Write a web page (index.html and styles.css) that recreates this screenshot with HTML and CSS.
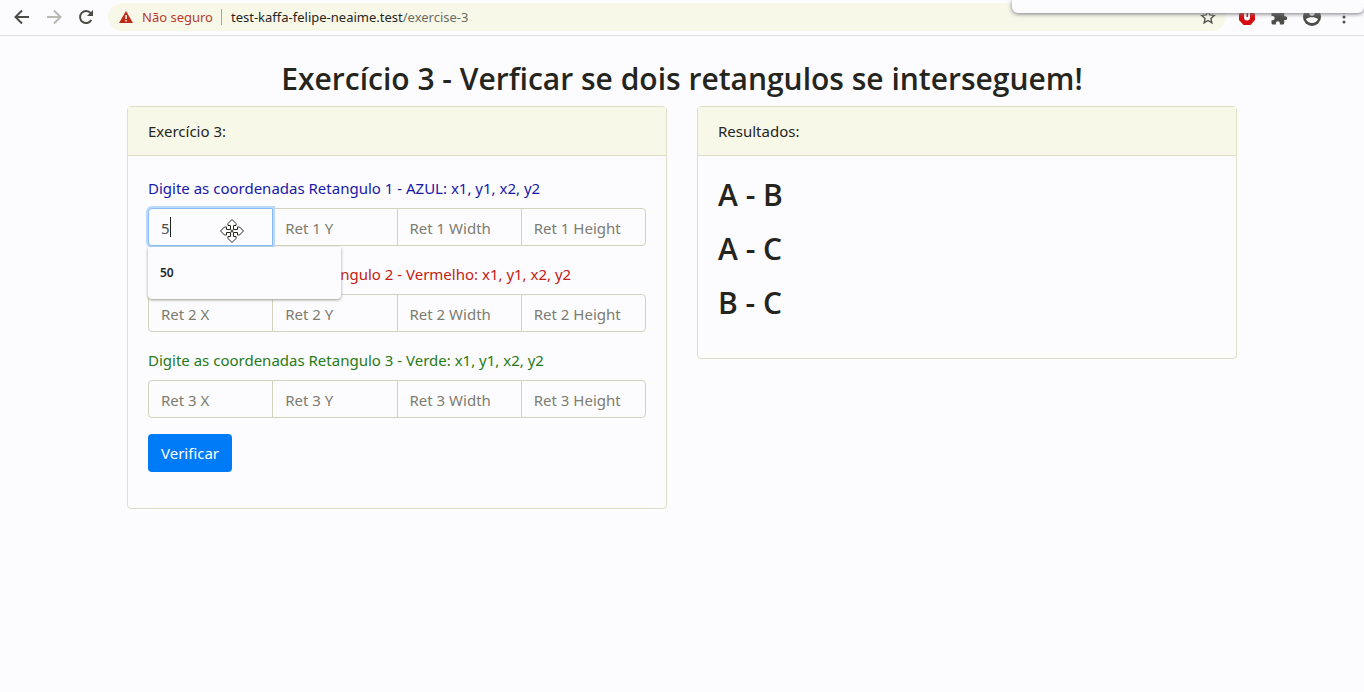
FILE: index.html
```html
<!DOCTYPE html>
<html lang="pt-BR">
<head>
<meta charset="utf-8">
<title>Exercício 3</title>
<link rel="stylesheet" href="styles.css">
</head>
<body>
<header class="toolbar">
  <button class="icon-button" type="button" aria-label="Voltar"><svg width="20" height="20" viewBox="0 0 20 20" fill="none" stroke="#4c4c48" stroke-width="2"><path d="M17 10H4M10 3.500L3.500 10L10 16.500"/></svg></button>
  <button class="icon-button" type="button" aria-label="Avançar"><svg width="20" height="20" viewBox="0 0 20 20" fill="none" stroke="#b9b9b4" stroke-width="2"><path d="M3 10H16M10 3.500L16.500 10L10 16.500"/></svg></button>
  <button class="icon-button" type="button" aria-label="Recarregar"><svg width="20" height="20" viewBox="0 0 20 20"><path d="M15.300 13A6 6 0 1 1 14.700 6.200" fill="none" stroke="#4c4c48" stroke-width="2"/><path d="M17 3v6h-6z" fill="#4c4c48"/></svg></button>
  <div class="address">
    <svg width="14" height="14" viewBox="0 0 14 14"><path d="M7 1L14 13H0z" fill="#bf2a16"/><path d="M6.300 5h1.500v4H6.300zM6.300 10h1.500v1.500H6.300z" fill="#fff"/></svg>
    <span class="insecure">Não seguro</span>
    <span class="divider"></span>
    <span class="url">test-kaffa-felipe-neaime.test<span class="path">/exercise-3</span></span>
    <button class="icon-button star" type="button" aria-label="Favoritar"><svg width="16" height="16" viewBox="0 0 16 16" fill="none" stroke="#4c4c48" stroke-width="1.300"><path d="M8 1.800L9.800 6l4.500.400-3.400 3 1 4.400L8 11.500l-3.900 2.300 1-4.400-3.400-3L6.200 6z"/></svg></button>
  </div>
  <div class="extensions">
    <button class="icon-button" type="button" aria-label="Extensão"><svg width="18" height="18" viewBox="0 0 18 18"><path d="M5.500 1h7L17 6v6l-4.500 5h-7L1 12V6z" fill="#d50c12"/><path d="M6 4v5.500a3 3 0 0 0 6 0V4l-2 1v4H8.500V4z" fill="#fff"/></svg></button>
    <button class="icon-button" type="button" aria-label="Extensões"><svg width="18" height="18" viewBox="0 0 24 24" fill="#4c4c48"><path d="M20.500 11H19V7a2 2 0 0 0-2-2h-4V3.500a2.500 2.500 0 0 0-5 0V5H4a2 2 0 0 0-2 2v3.800h1.500a2.700 2.700 0 0 1 0 5.400H2V20c0 1.100.900 2 2 2h3.800v-1.500a2.700 2.700 0 0 1 5.400 0V22H17a2 2 0 0 0 2-2v-4h1.500a2.500 2.500 0 0 0 0-5z"/></svg></button>
    <button class="icon-button" type="button" aria-label="Perfil"><svg width="20" height="20" viewBox="0 0 20 20"><circle cx="10" cy="10" r="9" fill="#4c4c48"/><circle cx="10" cy="6" r="2.800" fill="#fcfcff"/><path d="M4 12C7 9.800 13 9.800 16 12C14.500 17.200 5.500 17.200 4 12z" fill="#fcfcff"/></svg></button>
    <button class="icon-button" type="button" aria-label="Menu"><svg width="16" height="16" viewBox="0 0 16 16" fill="#4c4c48"><circle cx="8" cy="3" r="1.500"/><circle cx="8" cy="8" r="1.500"/><circle cx="8" cy="13" r="1.500"/></svg></button>
  </div>
  <div class="overlay"></div>
</header>
<main class="container">
  <h1 class="title">Exercício 3 - Verficar se dois retangulos se interseguem!</h1>
  <div class="columns">
    <section class="card">
      <div class="card-header">Exercício 3:</div>
      <form class="card-body">
        <fieldset class="group">
          <legend class="label blue">Digite as coordenadas Retangulo 1 - AZUL: x1, y1, x2, y2</legend>
          <div class="inputs">
            <div class="field active">
              <input class="input" type="text" value="5" aria-label="Ret 1 X">
              <span class="caret"></span>
              <svg class="pointer" width="24" height="24" viewBox="0 0 24 24" fill="#fff" stroke="#26261f" stroke-width="1"><path d="M12 .500L16 4.500V6.500H13.500V10.500H17.500V8H19.500L23.500 12L19.500 16H17.500V13.500H13.500V17.500H16V19.500L12 23.500L8 19.500V17.500H10.500V13.500H6.500V16H4.500L.500 12L4.500 8H6.500V10.500H10.500V6.500H8V4.500z"/><path d="M12 10.500V13.500M10.500 12H13.500"/></svg>
              <div class="suggestions">50</div>
            </div>
            <div class="field"><input class="input" type="text" placeholder="Ret 1 Y" aria-label="Ret 1 Y"></div>
            <div class="field"><input class="input" type="text" placeholder="Ret 1 Width" aria-label="Ret 1 Width"></div>
            <div class="field"><input class="input" type="text" placeholder="Ret 1 Height" aria-label="Ret 1 Height"></div>
          </div>
        </fieldset>
        <fieldset class="group">
          <legend class="label red">Digite as coordenadas Retangulo 2 - Vermelho: x1, y1, x2, y2</legend>
          <div class="inputs">
            <div class="field"><input class="input" type="text" placeholder="Ret 2 X" aria-label="Ret 2 X"></div>
            <div class="field"><input class="input" type="text" placeholder="Ret 2 Y" aria-label="Ret 2 Y"></div>
            <div class="field"><input class="input" type="text" placeholder="Ret 2 Width" aria-label="Ret 2 Width"></div>
            <div class="field"><input class="input" type="text" placeholder="Ret 2 Height" aria-label="Ret 2 Height"></div>
          </div>
        </fieldset>
        <fieldset class="group">
          <legend class="label green">Digite as coordenadas Retangulo 3 - Verde: x1, y1, x2, y2</legend>
          <div class="inputs">
            <div class="field"><input class="input" type="text" placeholder="Ret 3 X" aria-label="Ret 3 X"></div>
            <div class="field"><input class="input" type="text" placeholder="Ret 3 Y" aria-label="Ret 3 Y"></div>
            <div class="field"><input class="input" type="text" placeholder="Ret 3 Width" aria-label="Ret 3 Width"></div>
            <div class="field"><input class="input" type="text" placeholder="Ret 3 Height" aria-label="Ret 3 Height"></div>
          </div>
        </fieldset>
        <button class="submit" type="button">Verificar</button>
      </form>
    </section>
    <section class="card">
      <div class="card-header">Resultados:</div>
      <div class="card-body">
        <h2 class="result">A - B</h2>
        <h2 class="result">A - C</h2>
        <h2 class="result">B - C</h2>
      </div>
    </section>
  </div>
</main>
</body>
</html>
```
FILE: styles.css
```css
* { box-sizing: border-box; }
body {
  margin: 0;
  background: #fcfcff;
  color: #25251d;
  font-family: "Noto Sans", "Open Sans", sans-serif;
  font-size: 15px;
  line-height: 24px;
}
.toolbar {
  position: relative;
  display: flex;
  align-items: center;
  gap: 12px;
  height: 36px;
  padding: 0 12px 2px 12px;
  border-bottom: 1px solid #e1e1e3;
  overflow: hidden;
}
.icon-button {
  display: flex;
  padding: 0;
  border: 0;
  background: none;
}
.address {
  display: flex;
  flex: 1;
  align-items: center;
  height: 28px;
  padding: 0 10px 0 11px;
  border-radius: 14px;
  background: #f8f8e9;
  font-size: 13px;
}
.insecure { margin-left: 9px; color: #b83a2b; }
.divider { width: 1px; height: 16px; margin: 0 9px 0 8px; background: #a9a99e; }
.path { color: #6c6c62; }
.star { margin-left: auto; }
.extensions { display: flex; align-items: center; gap: 14px; }
.overlay {
  position: absolute;
  top: 0;
  right: 0;
  width: 352px;
  height: 13px;
  border-radius: 0 0 6px 6px;
  background: #fcfcff;
  box-shadow: 0 1px 4px #77777f;
}
.container { max-width: 1110px; margin: 0 auto; padding-top: 24px; }
.title, .result { margin: 0; font-family: "Open Sans", "Noto Sans", sans-serif; font-size: 30px; font-weight: 600; line-height: 38px; }
.title { margin-bottom: 8px; text-align: center; }
.result { margin-bottom: 16px; }
.columns { display: grid; grid-template-columns: 1fr 1fr; align-items: start; gap: 30px; }
.card { border: 1px solid #dedec6; border-radius: 4px; }
.card-header {
  padding: 12px 20px;
  border-bottom: 1px solid #dedec6;
  background: #f8f8e9;
}
.card-body { padding: 20px; }
.group { min-width: 0; margin: 0 0 16px; padding: 0; border: 0; }
.label { margin-bottom: 8px; padding: 0; }
.blue { color: #1818a8; }
.red { color: #c4200f; }
.green { color: #267a16; }
.inputs { display: flex; }
.field { position: relative; flex: 1; min-width: 0; }
.field + .field { margin-left: -1px; }
.input {
  display: block;
  width: 100%;
  height: 38px;
  padding: 7px 12px 5px;
  border: 1px solid #d2d2bd;
  border-radius: 0;
  background: #fcfcff;
  color: #4c4c48;
  font: inherit;
}
.input::placeholder { color: #7c7c70; opacity: 1; }
.field:first-child .input { border-radius: 4px 0 0 4px; }
.field:last-child .input { border-radius: 0 4px 4px 0; }
.active { z-index: 1; }
.active .input { border-color: #88bbf2; box-shadow: 0 0 0 2px #b9d8fa; }
.caret { position: absolute; top: 9px; left: 22px; width: 1px; height: 20px; background: #25251d; }
.pointer { position: absolute; top: 11px; left: 72px; }
.suggestions {
  position: absolute;
  top: 39px;
  left: 0;
  width: 193px;
  padding: 14px 12px;
  border-radius: 0 0 4px 4px;
  background: #fcfcff;
  box-shadow: 0 1px 3px #99998c;
  font-size: 12px;
  font-weight: 600;
}
.submit {
  display: block;
  height: 38px;
  margin-bottom: 16px;
  padding: 6px 13px;
  border: 0;
  border-radius: 4px;
  background: #007bf8;
  color: #fff;
  font: inherit;
}
```
